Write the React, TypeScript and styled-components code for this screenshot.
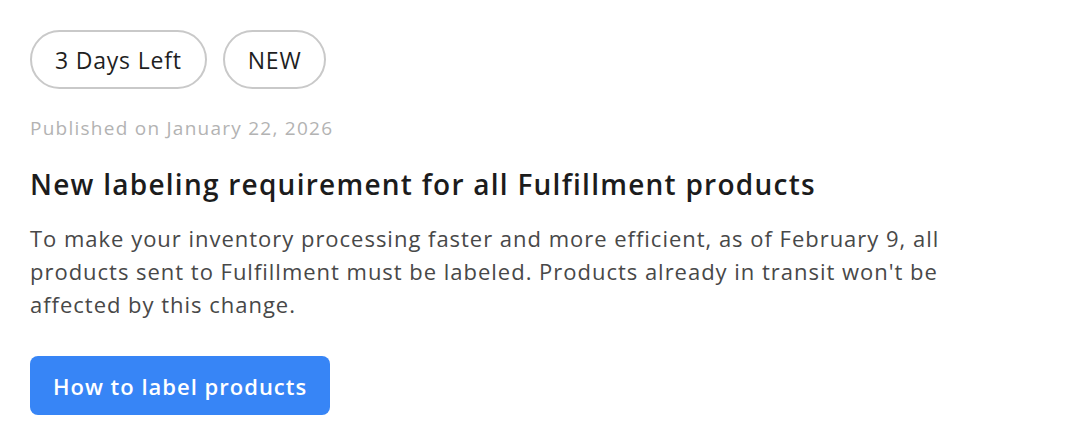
import React from 'react';
import styled, { createGlobalStyle } from 'styled-components';

const GlobalStyle = createGlobalStyle`
  html, body {
    margin: 0;
    padding: 0;
    background: #ffffff;
  }
  body {
    font-family: "Open Sans", Arial, sans-serif;
  }
`;

const Card = styled.section`
  padding: 30px 30px 0 30px;
  display: flex;
  flex-direction: column;
  align-items: flex-start;
`;

const Tags = styled.div`
  display: flex;
  gap: 16px;
`;

const Pill = styled.span`
  display: inline-flex;
  align-items: center;
  height: 55px;
  padding: 0 23px;
  border: 2px solid #c9c9c9;
  border-radius: 30px;
  font-size: 23px;
  letter-spacing: 0.8px;
  color: #1f1f1f;
`;

const Published = styled.div`
  margin-top: 27px;
  font-size: 19px;
  line-height: 24px;
  letter-spacing: 1.25px;
  color: #b3b3b3;
`;

const Title = styled.h2`
  margin: 26px 0 0 0;
  font-size: 28px;
  line-height: 36px;
  letter-spacing: 1.25px;
  font-weight: 600;
  color: #1c1c1c;
`;

const Body = styled.p`
  margin: 20px 0 0 0;
  font-size: 22px;
  line-height: 33px;
  letter-spacing: 0.98px;
  color: #484848;
`;

const Action = styled.button`
  margin-top: 35px;
  height: 59px;
  padding: 0 23px;
  border: none;
  border-radius: 8px;
  background: #3785f6;
  color: #ffffff;
  font-family: inherit;
  font-size: 22px;
  letter-spacing: 1px;
  font-weight: 600;
  cursor: pointer;
`;

export default function App() {
  return (
    <>
      <GlobalStyle />
      <Card>
        <Tags>
          <Pill>3 Days Left</Pill>
          <Pill>NEW</Pill>
        </Tags>
        <Published>Published on January 22, 2026</Published>
        <Title>New labeling requirement for all Fulfillment products</Title>
        <Body>
          To make your inventory processing faster and more efficient, as of February 9, all
          <br />
          products sent to Fulfillment must be labeled. Products already in transit won't be
          <br />
          affected by this change.
        </Body>
        <Action>How to label products</Action>
      </Card>
    </>
  );
}
